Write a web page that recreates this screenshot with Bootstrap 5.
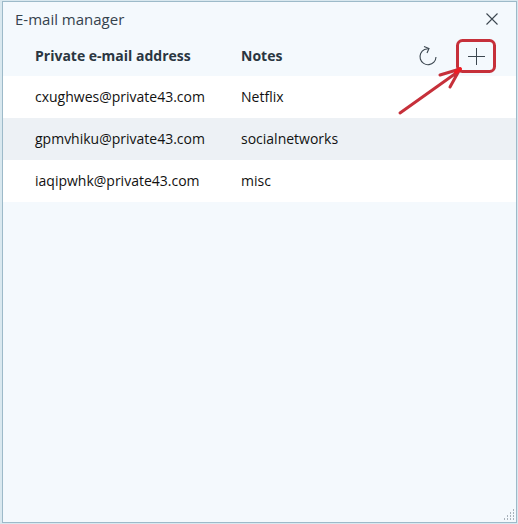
<!DOCTYPE html>
<html lang="en">
<head>
<meta charset="utf-8">
<meta name="viewport" content="width=device-width, initial-scale=1">
<title>E-mail manager</title>
<link href="https://cdn.jsdelivr.net/npm/bootstrap@5.3.0/dist/css/bootstrap.min.css" rel="stylesheet">
<style>
body { background: #d9e8ef; font-family: "Open Sans", "Noto Sans", sans-serif; font-size: 14px; line-height: 20px; color: #111; }
.manager { margin: 1px 1px 1px 2px; border: 1px solid #9dbac9; background: #f4f9fd; }
.title-bar { height: 34px; padding: 0 15px 0 12px; color: #35424d; }
.title-bar h1 { font-size: 15px; line-height: 20px; font-weight: 400; }
.icon-btn { padding: 0; border: 0; background: none; color: #3c4750; line-height: 0; }
.mail-table { table-layout: fixed; border-collapse: collapse; }
.mail-table th, .mail-table td { height: 42px; padding: 0; vertical-align: middle; font-weight: 400; }
.mail-table thead th, .mail-table thead td { height: 40px; font-weight: 700; color: #2a3641; }
.mail-table tbody tr { background: #fff; }
.mail-table tbody tr:nth-child(even) { background: #edf1f5; }
.mail-table .address-col { width: 238px; }
.mail-table .tools-col { width: 104px; }
.mail-table .address-cell { padding-left: 32px; }
.add-wrap { width: 40px; height: 34px; }
.callout { position: absolute; right: 0; top: 0; pointer-events: none; }
.grip { padding: 0 1px 1px 0; line-height: 0; }
</style>
<script src="https://cdn.jsdelivr.net/npm/bootstrap@5.3.0/dist/js/bootstrap.bundle.min.js" defer></script>
</head>
<body class="min-vh-100 d-flex flex-column">
<main class="manager flex-grow-1 d-flex flex-column">
  <header class="title-bar d-flex align-items-center justify-content-between">
    <h1 class="m-0">E-mail manager</h1>
    <button type="button" class="icon-btn" aria-label="Close">
      <svg width="18" height="14" viewBox="0 0 18 14" fill="none" stroke="currentColor" stroke-width="1.1"><path d="M3.5 1.500 14.500 12.500M14.500 1.500 3.500 12.500"/></svg>
    </button>
  </header>
  <table class="mail-table w-100">
    <colgroup><col class="address-col"><col><col class="tools-col"></colgroup>
    <thead>
      <tr>
        <th scope="col" class="address-cell">Private e-mail address</th>
        <th scope="col">Notes</th>
        <td>
          <div class="d-flex align-items-center">
            <button type="button" class="icon-btn ms-1" aria-label="Refresh">
              <svg width="24" height="24" viewBox="0 0 24 24" fill="none" stroke="currentColor" stroke-width="1.1"><path d="M20 13A8 8 0 1 1 8.500 5.500L13 4.500"/><path d="M8 2.500 13 4.500 11 9"/></svg>
            </button>
            <div class="add-wrap position-relative d-flex align-items-center justify-content-center ms-3">
              <button type="button" class="icon-btn" aria-label="Add e-mail address">
                <svg width="18" height="18" viewBox="0 0 18 18" fill="none" stroke="currentColor" stroke-width="1"><path d="M9.500 1v17M1 9.500h17"/></svg>
              </button>
              <svg class="callout" width="100" height="78" viewBox="0 0 100 78" fill="none" stroke="#c6303a" stroke-width="3" stroke-linecap="round" stroke-linejoin="round" aria-hidden="true">
                <rect x="61.500" y="1.500" width="37" height="31" rx="5"/>
                <path d="M4 74 63 32M44 36 64 30 54 48"/>
                <path d="M60 33l4-3" stroke="#ef1c24" stroke-width="4"/>
              </svg>
            </div>
          </div>
        </td>
      </tr>
    </thead>
    <tbody>
      <tr><td class="address-cell">cxughwes@private43.com</td><td>Netflix</td><td></td></tr>
      <tr><td class="address-cell">gpmvhiku@private43.com</td><td>socialnetworks</td><td></td></tr>
      <tr><td class="address-cell">iaqipwhk@private43.com</td><td>misc</td><td></td></tr>
    </tbody>
  </table>
  <div class="grip mt-auto align-self-end">
    <svg width="12" height="12" viewBox="0 0 12 12" fill="#a9b3bb" aria-hidden="true"><path d="M10 0h1v2h-1zM10 3h1v2h-1zM7 3h1v2h-1zM10 6h1v2h-1zM7 6h1v2h-1zM4 6h1v2h-1zM10 9h1v2h-1zM7 9h1v2h-1zM4 9h1v2h-1zM1 9h1v2h-1z"/></svg>
  </div>
</main>
</body>
</html>
